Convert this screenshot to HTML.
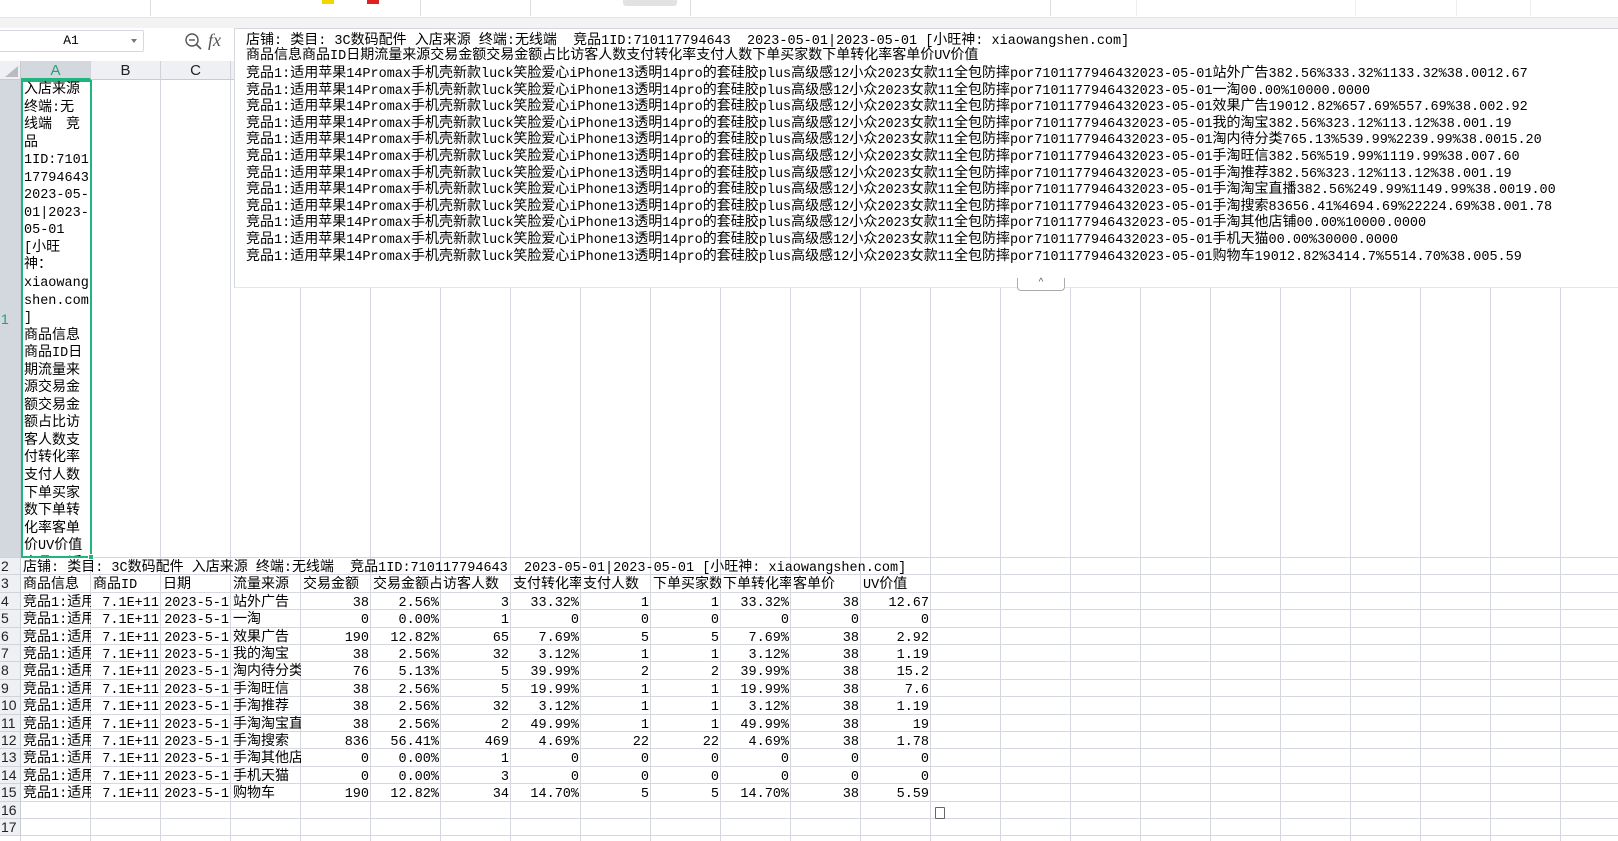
<!DOCTYPE html>
<html><head><meta charset="utf-8">
<style>
*{margin:0;padding:0;box-sizing:border-box}
body{width:1618px;height:841px;overflow:hidden;background:#fff;position:relative;font-family:"Noto Sans CJK SC","WenQuanYi Zen Hei",sans-serif;font-size:14px;color:#000}
.abs{position:absolute}
.a{font-family:"Liberation Mono",monospace;font-size:13.5px;line-height:1}
.c{position:absolute;white-space:pre;overflow:hidden;line-height:17px;padding:0 2px;font-size:14px}
.r{text-align:right}
.hl{position:absolute;background:#d5d8de;height:1px}
.vl{position:absolute;background:#d5d8de;width:1px}
.colh{position:absolute;top:61px;height:19px;background:#eef0f3;border-right:1px solid #d0d3d9;border-bottom:1px solid #c8cbd1;text-align:center;font-family:"Liberation Sans",sans-serif;font-size:15px;line-height:19px;color:#222}
.rowh{position:absolute;left:0;width:21px;background:#eef0f3;border-bottom:1px solid #d0d3d9;border-right:1px solid #c8cbd1;font-family:"Liberation Sans",sans-serif;font-size:14px;padding-left:1px;color:#222;overflow:hidden}
#fx{position:absolute;left:234px;top:28px;width:1384px;height:260px;background:#fff;border-left:1px solid #d5d8de;border-top:1px solid #d5d8de;border-bottom:1px solid #e3e5e9;overflow:hidden}
.fl{position:absolute;left:11px;white-space:pre;height:17px;line-height:17px}
.al{height:17.55px;line-height:17.55px;overflow:visible;white-space:nowrap}
</style></head><body>
<div class="abs" style="left:0;top:0;width:1618px;height:18px;background:#fff;border-bottom:1px solid #e4e4e4"></div>
<div class="abs" style="left:0;top:18px;width:1618px;height:10px;background:#f3f3f3"></div>
<div class="abs" style="left:150px;top:0;width:1px;height:16px;background:#ddd"></div>
<div class="abs" style="left:420px;top:0;width:1px;height:16px;background:#ddd"></div>
<div class="abs" style="left:530px;top:0;width:1px;height:16px;background:#ddd"></div>
<div class="abs" style="left:623px;top:0;width:54px;height:6px;background:#e2e2e2;border-radius:0 0 3px 3px"></div>
<div class="abs" style="left:690px;top:0;width:1px;height:16px;background:#ddd"></div>
<div class="abs" style="left:1050px;top:0;width:1px;height:16px;background:#ddd"></div>
<div class="abs" style="left:1136px;top:0;width:1px;height:16px;background:#eee"></div>
<div class="abs" style="left:1355px;top:0;width:1px;height:16px;background:#eee"></div>
<div class="abs" style="left:1456px;top:0;width:1px;height:16px;background:#eee"></div>
<div class="abs" style="left:1530px;top:0;width:1px;height:16px;background:#eee"></div>
<div class="abs" style="left:322px;top:0;width:12px;height:4px;background:#f2d600"></div>
<div class="abs" style="left:367px;top:0;width:12px;height:4px;background:#e02020"></div>
<div class="abs" style="left:0;top:28px;width:1618px;height:33px;background:#fff"></div>
<div class="abs" style="left:-2px;top:30px;width:146px;height:22px;border:1px solid #d5d8de;border-radius:2px;background:#fff;text-align:center;font-family:'Liberation Mono',monospace;font-size:13px;line-height:20px">A1</div>
<div class="abs" style="left:131px;top:39px;width:0;height:0;border-left:3px solid transparent;border-right:3px solid transparent;border-top:4px solid #777"></div>
<svg class="abs" style="left:184px;top:32px" width="20" height="20" viewBox="0 0 20 20"><circle cx="8" cy="8" r="6" fill="none" stroke="#555" stroke-width="1.4"/><line x1="5" y1="8" x2="11" y2="8" stroke="#555" stroke-width="1.4"/><line x1="12.5" y1="12.5" x2="17" y2="17" stroke="#555" stroke-width="1.6"/></svg>
<div class="abs" style="left:208px;top:30px;font-family:'Liberation Serif',serif;font-style:italic;font-size:18px;color:#555">fx</div>
<div id="grid"></div>
<div class="abs" style="left:21px;top:80px;width:71px;height:478px;border:2px solid #1fb57c"></div>
<div class="abs" style="left:88px;top:554px;width:6px;height:6px;background:#1fb57c;border:1px solid #fff"></div>
<div class="c" id="a1" style="left:22px;top:80px;width:69px;height:476px;white-space:normal;padding:0 2px;overflow:hidden"><div class="al">入店来源</div><div class="al">终端:无</div><div class="al">线端　竞</div><div class="al">品</div><div class="al">1ID:7101</div><div class="al">17794643</div><div class="al">2023-05-</div><div class="al">01|2023-</div><div class="al">05-01</div><div class="al">[小旺</div><div class="al">神：</div><div class="al">xiaowang</div><div class="al">shen.com</div><div class="al">]</div><div class="al">商品信息</div><div class="al">商品ID日</div><div class="al">期流量来</div><div class="al">源交易金</div><div class="al">额交易金</div><div class="al">额占比访</div><div class="al">客人数支</div><div class="al">付转化率</div><div class="al">支付人数</div><div class="al">下单买家</div><div class="al">数下单转</div><div class="al">化率客单</div><div class="al">价UV价值</div><div class="al">竞品1:适</div></div>
<div id="fx"><div class="fl" style="top:2px">店铺: 类目: 3C数码配件 入店来源 终端:无线端  竞品1ID:710117794643  2023-05-01|2023-05-01 [小旺神: xiaowangshen.com]</div><div class="fl" style="top:17px">商品信息商品ID日期流量来源交易金额交易金额占比访客人数支付转化率支付人数下单买家数下单转化率客单价UV价值</div></div>
<div class="abs" style="left:1017px;top:278px;width:48px;height:13px;border:1px solid #aaa;border-top:none;border-radius:0 0 4px 4px;background:#fff;text-align:center;font-size:10px;line-height:10px;color:#555;font-family:'Liberation Sans',sans-serif">^</div>
<div class="abs" style="left:935px;top:807px;width:10px;height:12px;border:1px solid #666;border-radius:1px"></div>
<script>
var P="竞品1:适用苹果14Promax手机壳新款luck笑脸爱心iPhone13透明14pro的套硅胶plus高级感12小众2023女款11全包防摔por7101177946432023-05-01";
var S=["站外广告382.56%333.32%1133.32%38.0012.67","一淘00.00%10000.0000","效果广告19012.82%657.69%557.69%38.002.92","我的淘宝382.56%323.12%113.12%38.001.19","淘内待分类765.13%539.99%2239.99%38.0015.20","手淘旺信382.56%519.99%1119.99%38.007.60","手淘推荐382.56%323.12%113.12%38.001.19","手淘淘宝直播382.56%249.99%1149.99%38.0019.00","手淘搜索83656.41%4694.69%22224.69%38.001.78","手淘其他店铺00.00%10000.0000","手机天猫00.00%30000.0000","购物车19012.82%3414.7%5514.70%38.005.59"];
var fx=document.getElementById('fx');
S.forEach(function(s,i){var d=document.createElement('div');d.className='fl';d.style.top=(35+i*16.6)+'px';d.textContent=P+s;fx.appendChild(d);});
var g=document.getElementById('grid'),h='';
var cols=[21];for(var i=0;i<23;i++)cols.push(21+70*(i+1));
var L="ABCDEFGHIJKLMNOPQRSTUVW";
var rt={1:80,2:558};for(var r=3;r<=18;r++)rt[r]=558+(r-2)*17.4;
for(var i=0;i<cols.length;i++)h+='<div class="vl" style="left:'+(cols[i]-1)+'px;top:80px;height:761px"></div>';
for(var r=2;r<=18;r++)h+='<div class="hl" style="left:0;width:1618px;top:'+Math.round(rt[r]-1)+'px"></div>';
for(var i=0;i<23;i++){var sel=i==0;h+='<div class="colh" style="left:'+cols[i]+'px;width:70px;'+(sel?'background:#d3d7de;color:#1fa374;border-bottom:2px solid #1fb57c':'')+'">'+L[i]+'</div>';}
h+='<div class="abs" style="left:0;top:61px;width:21px;height:19px;background:#eef0f3;border-right:1px solid #c8cbd1;border-bottom:1px solid #c8cbd1"></div><div class="abs" style="left:5px;top:66px;width:0;height:0;border-left:13px solid transparent;border-bottom:11px solid #b8bbc0"></div>';
for(var r=1;r<=17;r++){var t=rt[r],hh=rt[r+1]-rt[r];h+='<div class="rowh" style="top:'+t+'px;height:'+hh+'px;line-height:'+(r==1?hh:17)+'px;'+(r==1?'background:#d3d7de;color:#1fa374;':'')+'">'+r+'</div>';}
h+='<div class="c" style="left:21px;top:'+rt[2]+'px;width:1000px">店铺: 类目: 3C数码配件 入店来源 终端:无线端  竞品1ID:710117794643  2023-05-01|2023-05-01 [小旺神: xiaowangshen.com]</div>';
var hd=["商品信息","商品ID","日期","流量来源","交易金额","交易金额占比","访客人数","支付转化率","支付人数","下单买家数","下单转化率","客单价","UV价值"];
for(var i=0;i<13;i++)h+='<div class="c" style="left:'+cols[i]+'px;top:'+rt[3]+'px;width:70px">'+hd[i]+'</div>';
var D=[["站外广告",38,"2.56%",3,"33.32%",1,1,"33.32%",38,"12.67"],["一淘",0,"0.00%",1,0,0,0,0,0,0],["效果广告",190,"12.82%",65,"7.69%",5,5,"7.69%",38,"2.92"],["我的淘宝",38,"2.56%",32,"3.12%",1,1,"3.12%",38,"1.19"],["淘内待分类",76,"5.13%",5,"39.99%",2,2,"39.99%",38,"15.2"],["手淘旺信",38,"2.56%",5,"19.99%",1,1,"19.99%",38,"7.6"],["手淘推荐",38,"2.56%",32,"3.12%",1,1,"3.12%",38,"1.19"],["手淘淘宝直播",38,"2.56%",2,"49.99%",1,1,"49.99%",38,"19"],["手淘搜索",836,"56.41%",469,"4.69%",22,22,"4.69%",38,"1.78"],["手淘其他店铺",0,"0.00%",1,0,0,0,0,0,0],["手机天猫",0,"0.00%",3,0,0,0,0,0,0],["购物车",190,"12.82%",34,"14.70%",5,5,"14.70%",38,"5.59"]];
for(var k=0;k<12;k++){var t=rt[4+k],d=D[k];
h+='<div class="c" style="left:21px;top:'+t+'px;width:70px">竞品1:适用</div>';
h+='<div class="c r" style="left:91px;top:'+t+'px;width:70px">7.1E+11</div>';
h+='<div class="c r" style="left:161px;top:'+t+'px;width:70px">2023-5-1</div>';
h+='<div class="c" style="left:231px;top:'+t+'px;width:70px">'+d[0]+'</div>';
for(var j=1;j<10;j++)h+='<div class="c r" style="left:'+cols[3+j]+'px;top:'+t+'px;width:70px">'+d[j]+'</div>';}
g.innerHTML=h;
function wrap(el){var w=document.createTreeWalker(el,NodeFilter.SHOW_TEXT,null),n,ns=[];while(n=w.nextNode())ns.push(n);
ns.forEach(function(t){var s=t.nodeValue;if(!/[\x21-\x7e]/.test(s))return;var f=document.createDocumentFragment();
s.split(/([\x20-\x7e]+)/).forEach(function(p,i){if(!p)return;if(i%2){var sp=document.createElement('span');sp.className='a';sp.textContent=p;f.appendChild(sp);}else f.appendChild(document.createTextNode(p));});
t.parentNode.replaceChild(f,t);});}
document.querySelectorAll('.c,.fl').forEach(wrap);
</script>
</body></html>
